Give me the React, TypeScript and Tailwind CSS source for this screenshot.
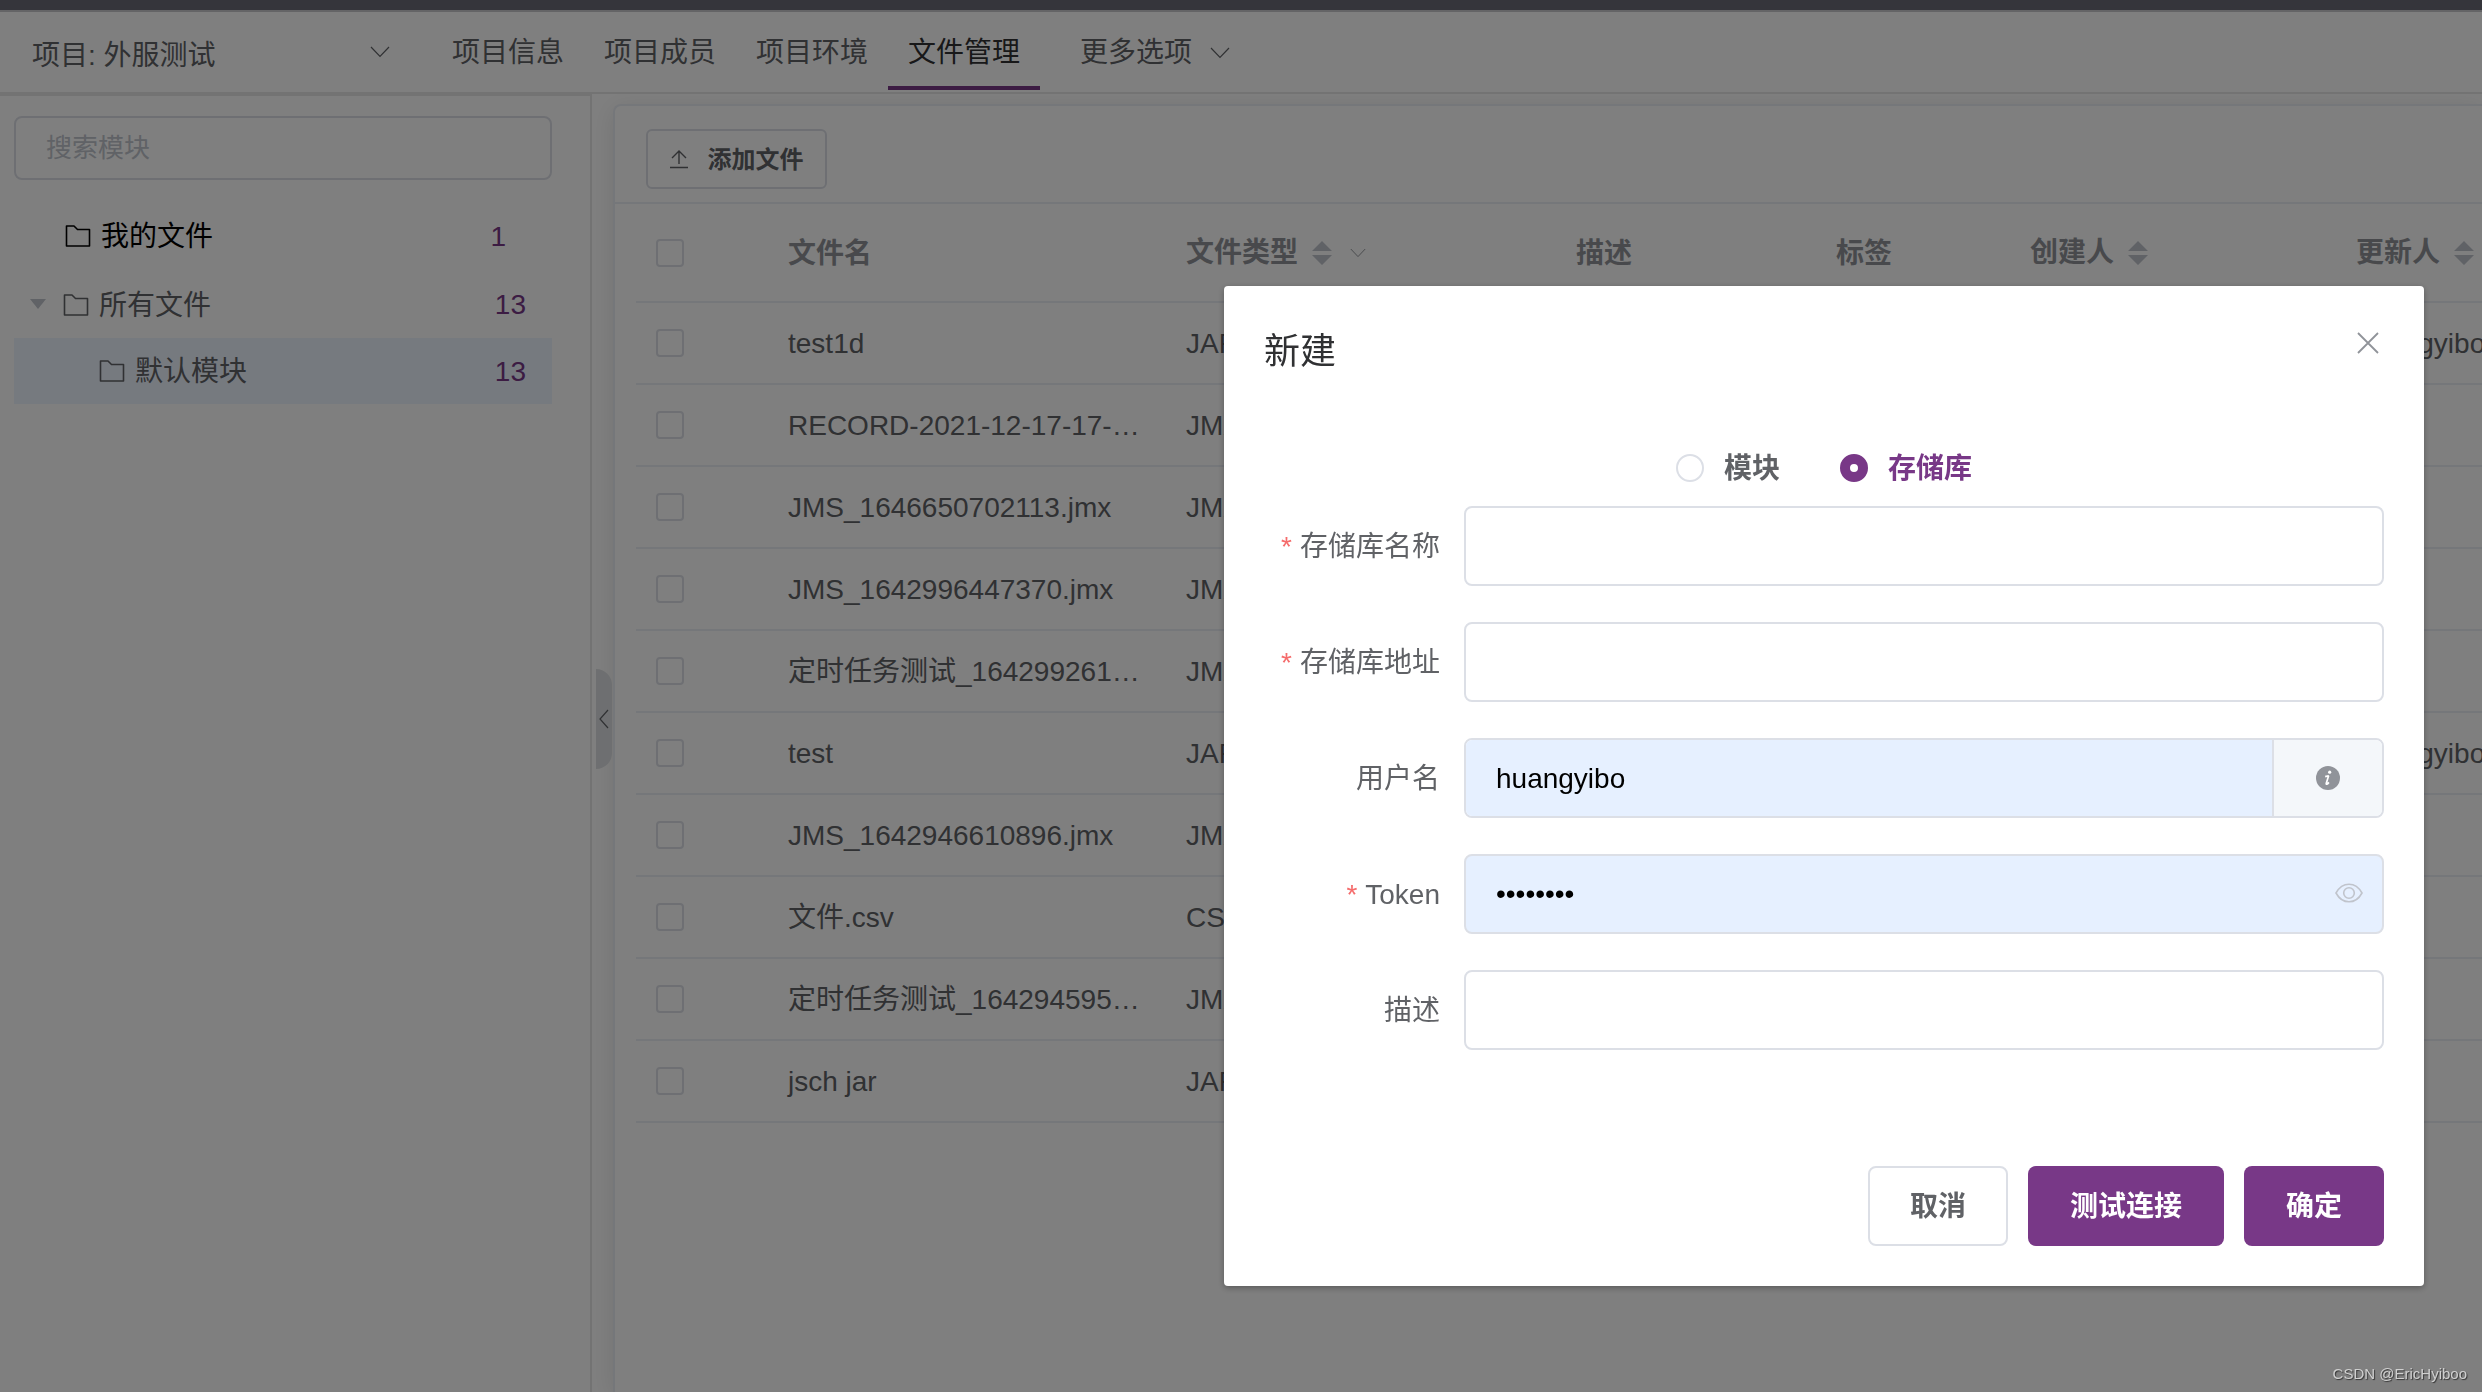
import { useState, type ReactNode } from 'react';

interface FileRow {
  name: string;
  type: string;
  updater: string;
}

const tabs = ['项目信息', '项目成员', '项目环境', '文件管理'];

const files: FileRow[] = [
  { name: 'test1d', type: 'JAR', updater: 'huangyibo' },
  { name: 'RECORD-2021-12-17-17-…', type: 'JMX', updater: '' },
  { name: 'JMS_1646650702113.jmx', type: 'JMX', updater: '' },
  { name: 'JMS_1642996447370.jmx', type: 'JMX', updater: '' },
  { name: '定时任务测试_164299261…', type: 'JMX', updater: '' },
  { name: 'test', type: 'JAR', updater: 'huangyibo' },
  { name: 'JMS_1642946610896.jmx', type: 'JMX', updater: '' },
  { name: '文件.csv', type: 'CSV', updater: '' },
  { name: '定时任务测试_164294595…', type: 'JMX', updater: '' },
  { name: 'jsch jar', type: 'JAR', updater: '' }
];

function ChevronDown({ className }: { className: string }) {
  return (
    <svg viewBox="0 0 20 12" className={className} fill="none" stroke="currentColor" strokeWidth="1.2">
      <path d="M1 1l9 9.5L19 1" />
    </svg>
  );
}

function FolderIcon() {
  return (
    <svg viewBox="0 0 26 22" className="w-[26px] h-[22px] shrink-0" fill="none" stroke="currentColor" strokeWidth="1.6">
      <path d="M1.500 1h7.500l3.500 3.500h12V21h-23z" strokeLinejoin="round" />
    </svg>
  );
}

function SortIcon() {
  return (
    <svg viewBox="0 0 20 24" className="w-5 h-6 text-[#c0c4cc]" fill="currentColor">
      <path d="M10 0l10 10H0zM10 24L0 14h20z" />
    </svg>
  );
}

function Checkbox({ label }: { label: string }) {
  return (
    <input
      type="checkbox"
      aria-label={label}
      className="block w-7 h-7 appearance-none rounded-[4px] border-2 border-[#dcdfe6] bg-white checked:bg-[#783887]"
    />
  );
}

function Header() {
  return (
    <header className="flex h-[82px] shrink-0 border-b-2 border-[#e6e6e6] bg-white">
      <div className="relative w-[432px] shrink-0">
        <select aria-label="项目" className="h-full w-full appearance-none pt-2 pl-8 text-[#606266] outline-none">
          <option>项目: 外服测试</option>
        </select>
        <ChevronDown className="pointer-events-none absolute top-[34px] left-[370px] w-5 h-3 text-[#606266]" />
      </div>
      <nav className="flex h-[78px]">
        {tabs.map((tab) => (
          <a
            key={tab}
            href="#"
            className={
              tab === '文件管理'
                ? 'flex items-center px-5 pt-2 border-b-4 border-[#783887] text-[#303133]'
                : 'flex items-center px-5 pt-2 border-b-4 border-transparent text-[#606266]'
            }
          >
            {tab}
          </a>
        ))}
        <button type="button" className="flex items-center gap-[18px] px-10 pt-2 border-b-4 border-transparent text-[#606266]">
          更多选项
          <ChevronDown className="w-5 h-3" />
        </button>
      </nav>
    </header>
  );
}

function Sidebar() {
  return (
    <aside className="w-[592px] shrink-0 border-t-2 border-r-2 border-[#e6e6e6] bg-white pl-[14px] pr-[38px] pt-5">
      <input
        type="text"
        aria-label="搜索模块"
        placeholder="搜索模块"
        className="w-full h-16 rounded-lg border-2 border-[#dcdfe6] px-[30px] text-[26px] outline-none placeholder:text-[#c0c4cc]"
      />
      <ul className="mt-[22px]">
        <li className="flex items-center h-[68px] pl-[51px] pr-[46px] text-black">
          <FolderIcon />
          <span className="ml-2.5 pt-0.5">我的文件</span>
          <span className="ml-auto pt-0.5 text-[#783887]">1</span>
        </li>
        <li className="flex items-center h-[68px] pl-4 pr-[26px] text-[#606266]">
          <svg viewBox="0 0 16 10" className="w-4 h-2.5 text-[#c0c4cc]" fill="currentColor">
            <path d="M0 0h16L8 10z" />
          </svg>
          <span className="ml-[17px] flex items-center pt-0.5">
            <FolderIcon />
            <span className="ml-2.5 pt-0.5">所有文件</span>
          </span>
          <span className="ml-auto pt-0.5 text-[#783887]">13</span>
        </li>
        <li className="flex items-center h-[66px] pl-[85px] pr-[26px] bg-[#edf4ff] text-[#606266]">
          <FolderIcon />
          <span className="ml-2.5 pt-0.5">默认模块</span>
          <span className="ml-auto pt-0.5 text-[#783887]">13</span>
        </li>
      </ul>
    </aside>
  );
}

function FileTable() {
  const head = 'h-[99px] border-b-2 border-[#ebeef5] px-5 text-left font-bold text-[#909399]';
  const cell = 'h-[82px] border-b-2 border-[#ebeef5] px-5 text-[#606266]';

  return (
    <table className="w-[2300px] table-fixed border-separate border-spacing-0 whitespace-nowrap">
      <colgroup>
        <col className="w-[132px]" />
        <col className="w-[398px]" />
        <col className="w-[390px]" />
        <col className="w-[260px]" />
        <col className="w-[194px]" />
        <col className="w-[326px]" />
        <col />
      </colgroup>
      <thead>
        <tr>
          <th className={head}><Checkbox label="全选" /></th>
          <th className={`${head} pt-0.5`}>文件名</th>
          <th className={head}>
            <span className="flex items-center">
              文件类型
              <span className="ml-3.5"><SortIcon /></span>
              <ChevronDown className="ml-[18px] w-4 h-2.5" />
            </span>
          </th>
          <th className={`${head} pt-0.5`}>描述</th>
          <th className={`${head} pt-0.5`}>标签</th>
          <th className={head}>
            <span className="flex items-center gap-3.5">创建人<SortIcon /></span>
          </th>
          <th className={head}>
            <span className="flex items-center gap-3.5">更新人<SortIcon /></span>
          </th>
        </tr>
      </thead>
      <tbody>
        {files.map((file) => (
          <tr key={file.name}>
            <td className={cell}><Checkbox label={file.name} /></td>
            <td className={`${cell} pt-0.5`}>{file.name}</td>
            <td className={`${cell} pt-0.5`}>{file.type}</td>
            <td className={cell} />
            <td className={cell} />
            <td className={cell} />
            <td className={`${cell} pt-0.5`}>{file.updater}</td>
          </tr>
        ))}
      </tbody>
    </table>
  );
}

function FilePanel() {
  return (
    <main className="relative min-w-0 flex-1 overflow-hidden pl-[21px] pt-2.5">
      <button
        type="button"
        aria-label="收起"
        className="absolute left-1 top-[575px] flex w-4 h-[100px] items-center justify-center rounded-r-2xl bg-[#dcdfe2] text-[#606266]"
      >
        <svg viewBox="0 0 10 20" className="w-2.5 h-5" fill="none" stroke="currentColor" strokeWidth="1.2">
          <path d="M9 1L1 10l8 9" />
        </svg>
      </button>
      <section className="h-full overflow-hidden rounded-tl-lg border-t-2 border-l-2 border-[#ebeef5] bg-white shadow-[0_4px_24px_rgba(0,0,0,0.1)]">
        <div className="h-[98px] border-b-2 border-[#ebeef5] pl-[31px] pt-[23px]">
          <button
            type="button"
            className="flex h-[60px] w-[181px] items-center justify-center gap-5 rounded-md border-2 border-[#dcdfe6] text-2xl font-bold text-[#606266]"
          >
            <svg viewBox="0 0 18 20" className="w-[18px] h-5" fill="none" stroke="currentColor" strokeWidth="1.4">
              <path d="M9 15V2M2 9l7-7 7 7M0 18.500h18" />
            </svg>
            <span className="pt-0.5">添加文件</span>
          </button>
        </div>
        <div className="pl-[21px]">
          <FileTable />
        </div>
      </section>
    </main>
  );
}

interface FieldProps {
  id: string;
  label: string;
  required?: boolean;
  children: ReactNode;
}

function Field({ id, label, required = false, children }: FieldProps) {
  return (
    <div className="flex h-20">
      <label htmlFor={id} className="flex w-[200px] items-center justify-end pr-6 pt-0.5 text-[#606266]">
        {required && <span className="mr-2 text-[#f56c6c]">*</span>}
        {label}
      </label>
      <div className="relative flex min-w-0 flex-1">{children}</div>
    </div>
  );
}

function CreateDialog() {
  const [kind, setKind] = useState('repository');
  const input = 'h-20 w-full min-w-0 rounded-lg border-2 border-[#dcdfe6] bg-white px-[30px] text-black outline-none';
  const filled = 'h-20 w-full min-w-0 rounded-lg border-2 border-[#dcdfe6] bg-[#e6f0ff] px-[30px] text-black outline-none';
  const radio = 'w-7 h-7 appearance-none rounded-full border-2 border-[#dcdfe6] bg-white checked:border-[10px] checked:border-[#783887]';

  return (
    <form
      role="dialog"
      aria-labelledby="dialog-title"
      className="flex w-[1200px] flex-col rounded-[4px] bg-white px-10 pb-10 shadow-[0_2px_6px_rgba(0,0,0,0.3)]"
    >
      <div className="flex items-center justify-between pt-[38px]">
        <h2 id="dialog-title" className="text-4xl leading-[56px] text-[#303133]">新建</h2>
        <button type="button" aria-label="关闭" className="mr-[3px] mb-[18px] p-0.5 text-[#909399]">
          <svg viewBox="0 0 22 22" className="w-[22px] h-[22px]" fill="none" stroke="currentColor" strokeWidth="1.8">
            <path d="M1 1l20 20M21 1L1 21" />
          </svg>
        </button>
      </div>

      <div className="mt-[60px] flex h-14 items-center gap-[60px] pl-[412px] font-bold">
        <label className={kind === 'module' ? 'flex items-center gap-5 text-[#783887]' : 'flex items-center gap-5 text-[#606266]'}>
          <input type="radio" name="kind" className={radio} checked={kind === 'module'} onChange={() => setKind('module')} />
          <span className="pt-0.5">模块</span>
        </label>
        <label className={kind === 'repository' ? 'flex items-center gap-5 text-[#783887]' : 'flex items-center gap-5 text-[#606266]'}>
          <input type="radio" name="kind" className={radio} checked={kind === 'repository'} onChange={() => setKind('repository')} />
          <span className="pt-0.5">存储库</span>
        </label>
      </div>

      <div className="mt-2.5 flex flex-col gap-9">
        <Field id="repo-name" label="存储库名称" required>
          <input id="repo-name" type="text" className={input} />
        </Field>
        <Field id="repo-path" label="存储库地址" required>
          <input id="repo-path" type="text" className={input} />
        </Field>
        <Field id="username" label="用户名">
          <div className="flex w-full overflow-hidden rounded-lg border-2 border-[#dcdfe6]">
            <input id="username" type="text" defaultValue="huangyibo" className="min-w-0 flex-1 bg-[#e6f0ff] px-[30px] pt-0.5 text-black outline-none" />
            <span className="flex w-[110px] items-center justify-center border-l-2 border-[#dcdfe6] bg-[#f4f7fa]">
              <svg viewBox="0 0 24 24" className="w-6 h-6">
                <circle cx="12" cy="12" r="12" fill="#909399" />
                <circle cx="13.7" cy="6.2" r="1.6" fill="#fff" />
                <path d="M9.2 10.6l3.400-.9-2.300 7.600c-.4 1.500.9 1.200 2.600-.9" fill="none" stroke="#fff" strokeWidth="1.7" strokeLinejoin="bevel" />
              </svg>
            </span>
          </div>
        </Field>
        <Field id="token" label="Token" required>
          <input id="token" type="password" defaultValue="12345678" className={filled} />
          <button type="button" aria-label="显示" className="absolute right-[21px] top-[29px] text-[#c0c4cc]">
            <svg viewBox="0 0 28 20" className="w-7 h-5" fill="none" stroke="currentColor" strokeWidth="1.6">
              <path d="M1 10C4 4.500 8.500 1.200 14 1.200S24 4.500 27 10c-3 5.500-7.500 8.800-13 8.800S4 15.500 1 10z" />
              <circle cx="14" cy="10" r="5.300" />
            </svg>
          </button>
        </Field>
        <Field id="description" label="描述">
          <input id="description" type="text" className={input} />
        </Field>
      </div>

      <div className="mt-[116px] flex justify-end gap-5 font-bold">
        <button type="button" className="h-20 rounded-lg border-2 border-[#dcdfe6] px-10 pt-0.5 text-[#606266]">取消</button>
        <button type="button" className="h-20 rounded-lg bg-[#783887] px-[42px] pt-0.5 text-white">测试连接</button>
        <button type="button" className="h-20 rounded-lg bg-[#783887] px-[42px] pt-0.5 text-white">确定</button>
      </div>
    </form>
  );
}

export default function App() {
  return (
    <div className="flex h-screen flex-col overflow-hidden bg-white font-['Liberation_Sans','Noto_Sans_CJK_SC',sans-serif] text-[28px] leading-10">
      <div className="h-3 shrink-0 border-b-2 border-[#c8c9cc] bg-[#6a6b76]" />
      <Header />
      <div className="flex min-h-0 flex-1">
        <Sidebar />
        <FilePanel />
      </div>

      {/* Modal layer */}
      <div className="fixed inset-0 flex items-start justify-end bg-black/50 pt-[286px] pr-[58px]">
        <CreateDialog />
      </div>

      {/* Watermark */}
      <span className="fixed right-[15px] bottom-2 text-[15px] leading-5 text-[#d0d0d0] [text-shadow:1px_1px_1px_rgba(0,0,0,0.6)]">
        CSDN @EricHyiboo
      </span>
    </div>
  );
}
